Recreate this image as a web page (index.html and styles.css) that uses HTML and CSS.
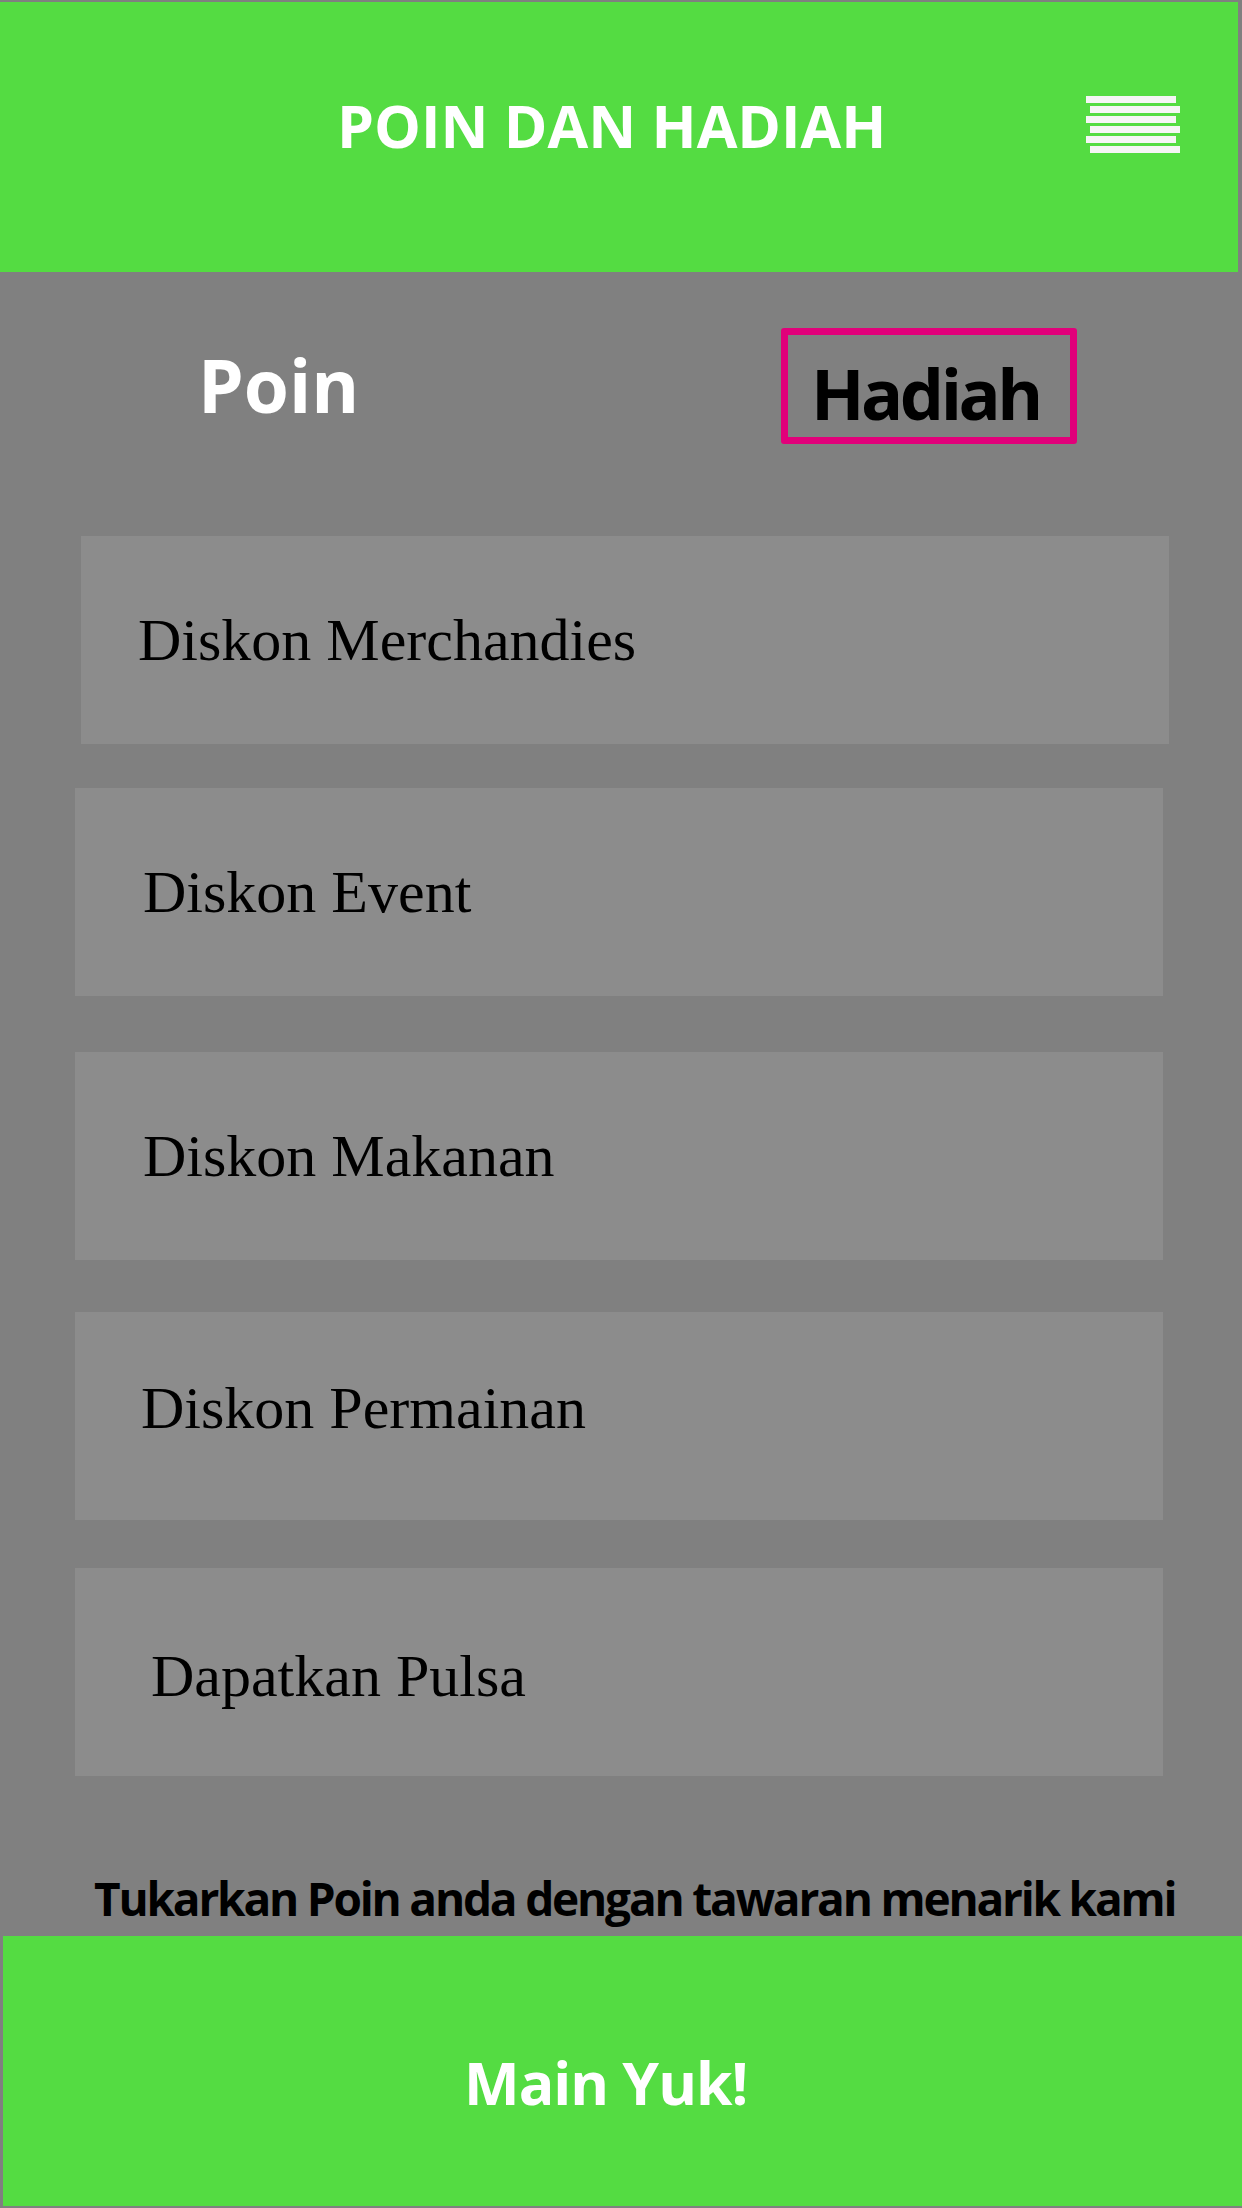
FILE: index.html
```html
<!DOCTYPE html>
<html lang="id">
<head>
<meta charset="utf-8">
<title>Poin dan Hadiah</title>
<link rel="stylesheet" href="styles.css">
</head>
<body>
<div class="screen">
  <header class="topbar">
    <h1 class="topbar-title">POIN DAN HADIAH</h1>
    <div class="menu-icon" aria-label="Menu">
      <span class="menu-bar"></span>
      <span class="menu-bar menu-bar--shift"></span>
      <span class="menu-bar"></span>
      <span class="menu-bar menu-bar--shift"></span>
      <span class="menu-bar"></span>
      <span class="menu-bar menu-bar--shift"></span>
    </div>
  </header>

  <nav class="tabs">
    <div class="tab tab--poin">Poin</div>
    <div class="tab tab--hadiah">Hadiah</div>
  </nav>

  <ul class="rewards">
    <li class="reward reward--1">Diskon Merchandies</li>
    <li class="reward reward--2">Diskon Event</li>
    <li class="reward reward--3">Diskon Makanan</li>
    <li class="reward reward--4">Diskon Permainan</li>
    <li class="reward reward--5">Dapatkan Pulsa</li>
  </ul>

  <p class="note">Tukarkan Poin anda dengan tawaran menarik kami</p>

  <div class="play-button">Main Yuk!</div>
</div>
</body>
</html>
```

FILE: styles.css
```css
* {
  box-sizing: border-box;
}

html, body {
  margin: 0;
  padding: 0;
}

body {
  width: 1242px;
  height: 2208px;
  overflow: hidden;
  background: #808080;
}

.screen {
  width: 1242px;
  height: 2208px;
  padding-top: 2px;
  display: flex;
  flex-direction: column;
}

/* ---------- header ---------- */
.topbar {
  height: 270px;
  margin-right: 4px;
  background: #54dc42;
  display: flex;
  align-items: flex-start;
  padding-top: 94px;
  padding-left: 337px;
}

.topbar-title {
  margin: 0;
  font-family: "Open Sans", "Noto Sans", sans-serif;
  font-weight: 700;
  font-size: 59px;
  line-height: 59px;
  color: #ffffff;
  letter-spacing: 0;
}

.menu-icon {
  margin-left: auto;
  margin-right: 58px;
  width: 94px;
  display: flex;
  flex-direction: column;
  gap: 3px;
}

.menu-bar {
  display: block;
  width: 90px;
  height: 7px;
  background: #f5f5f5;
}

.menu-bar--shift {
  margin-left: 4px;
}

/* ---------- tabs ---------- */
.tabs {
  display: flex;
  align-items: flex-start;
  padding-left: 198px;
  padding-right: 165px;
  margin-top: 56px;
}

.tab {
  font-family: "Open Sans", "Noto Sans", sans-serif;
  font-weight: 700;
}

.tab--poin {
  margin-top: 20px;
  font-size: 73px;
  line-height: 73px;
  color: #ffffff;
  letter-spacing: 0;
}

.tab--hadiah {
  margin-left: auto;
  width: 296px;
  height: 116px;
  border: 7px solid #e1007a;
  border-radius: 3px;
  padding-top: 23px;
  padding-left: 23px;
  font-size: 70px;
  line-height: 70px;
  color: #000000;
  letter-spacing: -3.5px;
  white-space: nowrap;
}

/* ---------- reward cards ---------- */
.rewards {
  list-style: none;
  margin: 92px 0 0 0;
  padding: 0;
  display: flex;
  flex-direction: column;
}

.reward {
  width: 1088px;
  height: 208px;
  margin-left: 75px;
  background: #8c8c8c;
  display: flex;
  align-items: center;
  font-family: "Liberation Serif", "Times New Roman", serif;
  font-size: 60px;
  line-height: 60px;
  color: #000000;
}

.reward--1 {
  margin-left: 81px;
  padding-left: 57px;
}

.reward--2 {
  margin-top: 44px;
  padding-left: 68px;
}

.reward--3 {
  margin-top: 56px;
  padding-left: 68px;
}

.reward--4 {
  margin-top: 52px;
  padding-left: 66px;
  padding-bottom: 16px;
}

.reward--5 {
  margin-top: 48px;
  padding-left: 76px;
  padding-top: 8px;
}

/* ---------- footer ---------- */
.note {
  margin: 99px 0 0 0;
  padding-left: 94px;
  font-family: "Open Sans", "Noto Sans", sans-serif;
  font-weight: 700;
  font-size: 46px;
  line-height: 46px;
  color: #000000;
  letter-spacing: -2.2px;
  white-space: nowrap;
}

.play-button {
  margin-top: 15px;
  margin-left: 3px;
  height: 270px;
  background: #54dc42;
  padding-top: 117px;
  padding-left: 461px;
  font-family: "Open Sans", "Noto Sans", sans-serif;
  font-weight: 700;
  font-size: 59px;
  line-height: 59px;
  color: #ffffff;
  letter-spacing: -1px;
}
```
